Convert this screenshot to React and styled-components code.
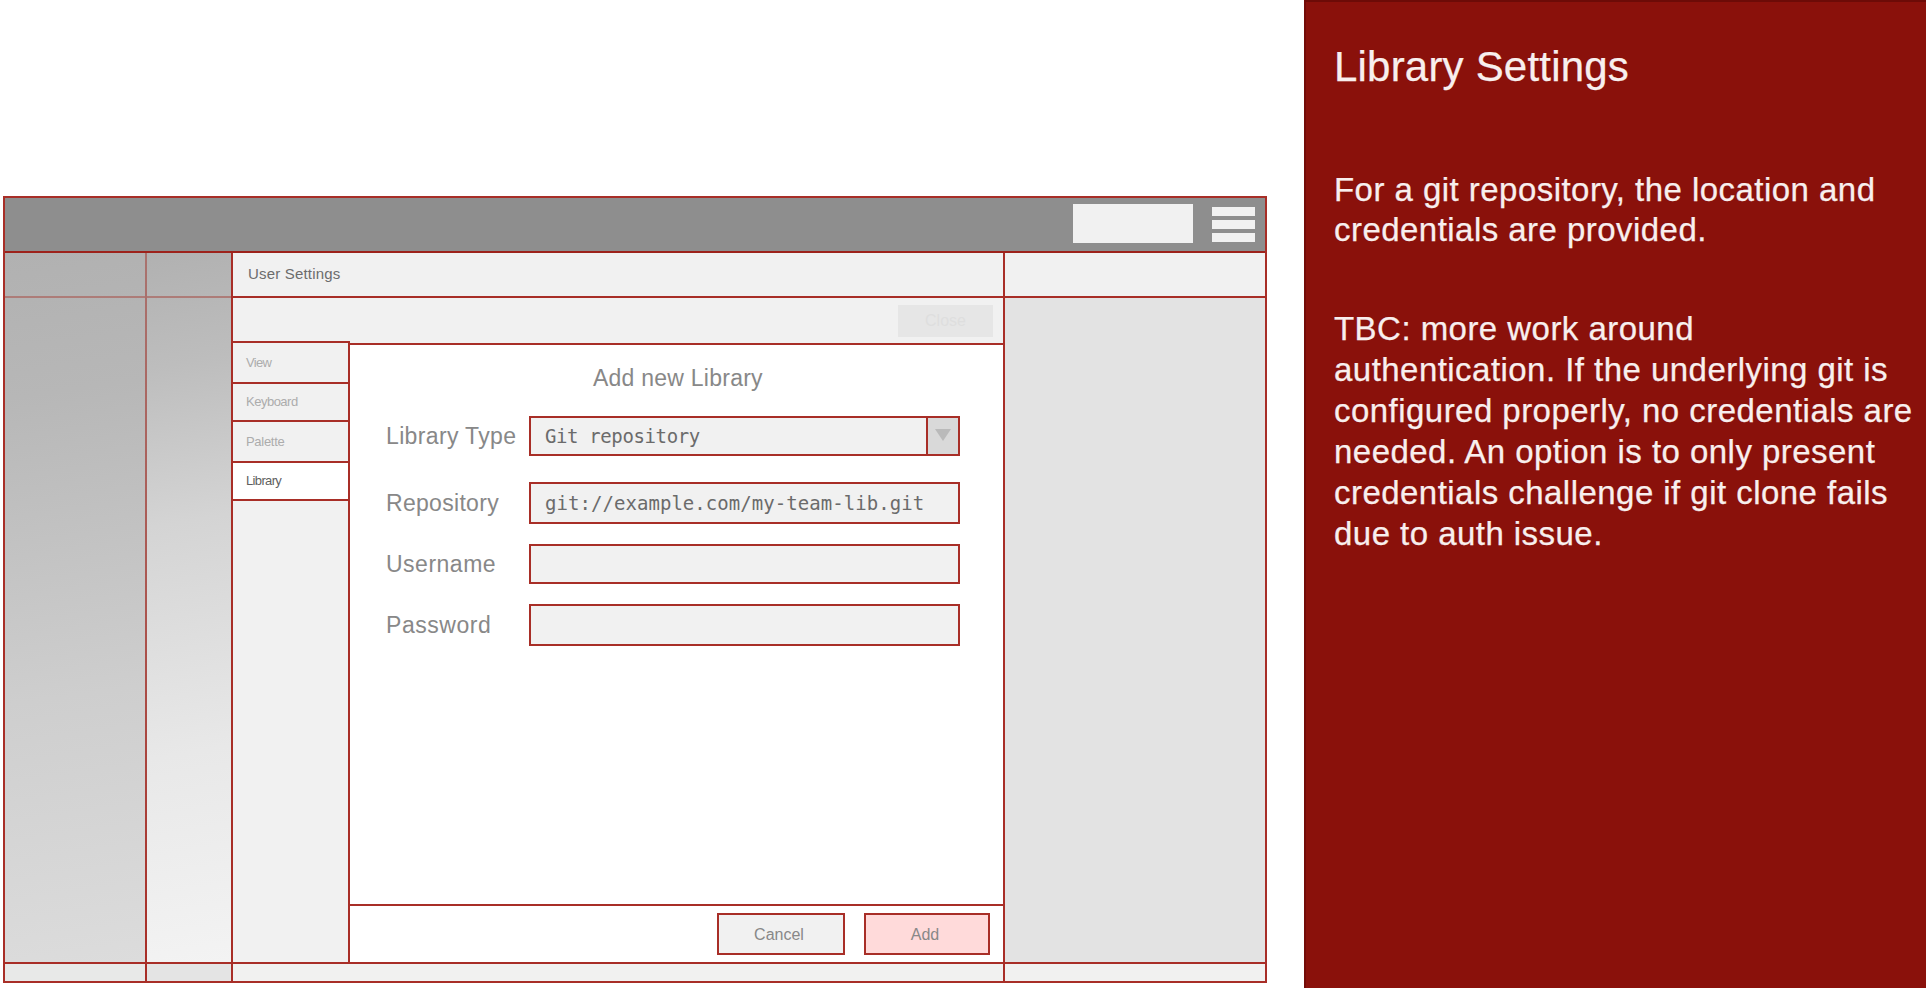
import React from "react";
import styled, { createGlobalStyle, css } from "styled-components";

const line = "#a82e27";
const sans = `"Liberation Sans", Arial, sans-serif`;

const GlobalStyle = createGlobalStyle`
  * { box-sizing: border-box; }
  body { margin: 0; background: #fff; font-family: ${sans}; }
`;

const Page = styled.div`
  display: flex;
  width: 1926px;
  height: 988px;
  overflow: hidden;
`;

const Stage = styled.main`
  width: 1304px;
  padding: 196px 0 0 3px;
`;

const Frame = styled.div`
  display: flex;
  flex-direction: column;
  width: 1264px;
  height: 787px;
  border: 2px solid ${line};
  background: #f1f1f1;
`;

const Header = styled.header`
  display: flex;
  justify-content: flex-end;
  align-items: flex-start;
  height: 55px;
  padding: 6px 10px 0 0;
  background: #8e8e8e;
  border-bottom: 2px solid #9d221b;
`;

const HeaderBox = styled.div`
  width: 120px;
  height: 39px;
  margin-right: 19px;
  background: #f1f1f1;
`;

const MenuIcon = styled.div`
  display: flex;
  flex-direction: column;
  gap: 4px;
  padding-top: 3px;
`;

const MenuBar = styled.span`
  width: 43px;
  height: 9px;
  background: #f1f1f1;
`;

const Body = styled.div`
  display: flex;
  height: 711px;
  border-bottom: 2px solid ${line};
`;

const ShadedColumns = styled.div`
  display: flex;
  width: 228px;
  border-right: 2px solid ${line};
`;

const ShadedColumn = styled.div`
  flex: none;
  width: ${(p) => p.$width}px;
  background: linear-gradient(${(p) => p.$fill});
`;

const ColumnRule = styled.div`
  width: 2px;
  background: linear-gradient(#a9736f, #ab554f 50%, ${line});
`;

const ShadedHead = styled.div`
  height: 45px;
  border-bottom: 2px solid #ad7c78;
`;

const Main = styled.section`
  width: 772px;
  border-right: 2px solid ${line};
`;

const TitleRow = styled.div`
  height: 45px;
  padding-left: 15px;
  border-bottom: 2px solid ${line};
  font-size: 15px;
  line-height: 42px;
  letter-spacing: 0.18px;
  color: #6c6c6c;
`;

const Settings = styled.div`
  display: flex;
  height: 664px;
`;

const Tabs = styled.nav`
  width: 117px;
  margin-top: 43px;
  border-top: 2px solid ${line};
  border-right: 2px solid ${line};
`;

const Tab = styled.div`
  height: ${(p) => p.$height}px;
  line-height: ${(p) => p.$height - 2}px;
  padding-left: 13px;
  border-bottom: 2px solid ${line};
  font-size: 13px;
  letter-spacing: ${(p) => p.$spacing}px;
  color: ${(p) => (p.$active ? "#5f5f5f" : "#acacac")};
  background: ${(p) => (p.$active ? "#fff" : "#f1f1f1")};
`;

const Content = styled.div`
  display: flex;
  flex-direction: column;
  width: 653px;
`;

const Toolbar = styled.div`
  display: flex;
  justify-content: flex-end;
  height: 47px;
  padding: 7px 10px 0 0;
  border-bottom: 2px solid ${line};
`;

const CloseButton = styled.div`
  width: 95px;
  height: 32px;
  background: #e6e6e6;
  color: #dedede;
  font-size: 16px;
  line-height: 32px;
  text-align: center;
`;

const Form = styled.div`
  flex: 1;
  background: #fff;
  color: #888;
  font-size: 23px;
`;

const FormTitle = styled.h2`
  margin: 0 0 5px;
  padding-left: 243px;
  font-size: 23px;
  font-weight: 400;
  line-height: 66px;
  letter-spacing: 0.24px;
`;

const FormRow = styled.div`
  display: flex;
  height: ${(p) => p.$height}px;
  line-height: ${(p) => p.$height}px;
  margin-bottom: ${(p) => p.$gap}px;
  padding-left: 36px;
`;

const Label = styled.label`
  width: 143px;
  white-space: nowrap;
  letter-spacing: ${(p) => p.$spacing}px;
`;

const Field = styled.div`
  display: flex;
  justify-content: space-between;
  align-items: center;
  width: 431px;
  padding-left: 14px;
  border: 2px solid ${line};
  background: #f1f1f1;
  color: #6b6b6b;
  font: 19px "DejaVu Sans Mono", monospace;
  letter-spacing: ${(p) => (p.$select ? -0.38 : 0.05)}px;
`;

const DropArrow = styled.div`
  display: flex;
  justify-content: center;
  width: 32px;
  height: 100%;
  padding-top: 11px;
  border-left: 2px solid ${line};
  background: #d9d9d9;
`;

const Actions = styled.div`
  display: flex;
  justify-content: flex-end;
  gap: 19px;
  height: 58px;
  padding: 7px 13px 0 0;
  border-top: 2px solid ${line};
  background: #fff;
`;

const Action = styled.div`
  width: ${(p) => p.$width}px;
  height: 42px;
  padding: 1px 4px 0 0;
  border: 2px solid ${line};
  color: #888;
  font-size: 16px;
  line-height: 38px;
  text-align: center;
  background: #f1f1f1;
  ${(p) => p.$primary && css`background: #ffdada;`}
`;

const RightColumn = styled.div`
  flex: 1;
  background: #e3e3e3;
`;

const RightHead = styled.div`
  height: 45px;
  background: #f1f1f1;
  border-bottom: 2px solid ${line};
`;

const Footer = styled.footer`
  display: flex;
  height: 17px;
`;

const FooterCell = styled.div`
  width: ${(p) => p.$width}px;
  background: ${(p) => p.$fill};
  border-right: ${(p) => (p.$last ? "none" : `2px solid ${line}`)};
`;

const Notes = styled.aside`
  width: 622px;
  height: 988px;
  padding: 41px 0 0 28px;
  border-top: 2px solid #6d0b07;
  border-left: 2px solid #740c08;
  background: #8a110b;
  color: #f8efee;
  white-space: nowrap;
  -webkit-text-stroke: 0.25px #f8efee;
`;

const NotesTitle = styled.h1`
  margin: 0 0 79px;
  font-size: 42px;
  font-weight: 400;
  line-height: 48px;
  letter-spacing: 0.2px;
`;

const Note = styled.p`
  margin: 0 0 ${(p) => p.$gap || 0}px;
  font-size: 33px;
  line-height: ${(p) => p.$leading}px;
  letter-spacing: 0.46px;
`;

const tabs = [
  { name: "View", height: 41, spacing: -0.7 },
  { name: "Keyboard", height: 38, spacing: -0.5 },
  { name: "Palette", height: 41, spacing: -0.3 },
  { name: "Library", height: 38, spacing: -0.65, active: true },
];

const fields = [
  { label: "Library Type", value: "Git repository", height: 40, gap: 26, spacing: 0.35, select: true },
  { label: "Repository", value: "git://example.com/my-team-lib.git", height: 42, gap: 20, spacing: 0.3 },
  { label: "Username", height: 40, gap: 20, spacing: 0.5 },
  { label: "Password", height: 42, gap: 0, spacing: 0.55 },
];

export default function App() {
  return (
    <Page>
      <GlobalStyle />
      <Stage>
        <Frame>
          <Header>
            <HeaderBox />
            <MenuIcon>
              <MenuBar />
              <MenuBar />
              <MenuBar />
            </MenuIcon>
          </Header>
          <Body>
            <ShadedColumns>
              <ShadedColumn $width={140} $fill="172deg, #b1b1b1, #b7b7b7 20%, #cecece 62%, #dcdcdc">
                <ShadedHead />
              </ShadedColumn>
              <ColumnRule />
              <ShadedColumn $width={84} $fill="170deg, #b1b1b1, #bdbdbd 16%, #d4d4d4 38%, #e8e8e8 70%, #f3f3f3">
                <ShadedHead />
              </ShadedColumn>
            </ShadedColumns>
            <Main>
              <TitleRow>User Settings</TitleRow>
              <Settings>
                <Tabs>
                  {tabs.map((t) => (
                    <Tab key={t.name} $height={t.height} $spacing={t.spacing} $active={t.active}>
                      {t.name}
                    </Tab>
                  ))}
                </Tabs>
                <Content>
                  <Toolbar>
                    <CloseButton>Close</CloseButton>
                  </Toolbar>
                  <Form>
                    <FormTitle>Add new Library</FormTitle>
                    {fields.map((f) => (
                      <FormRow key={f.label} $height={f.height} $gap={f.gap}>
                        <Label $spacing={f.spacing}>{f.label}</Label>
                        <Field $select={f.select}>
                          <span>{f.value}</span>
                          {f.select && (
                            <DropArrow>
                              <svg width="16" height="12" viewBox="0 0 16 12">
                                <path d="M0 0H16L8 12Z" fill="#bababa" />
                              </svg>
                            </DropArrow>
                          )}
                        </Field>
                      </FormRow>
                    ))}
                  </Form>
                  <Actions>
                    <Action $width={128}>Cancel</Action>
                    <Action $width={126} $primary>Add</Action>
                  </Actions>
                </Content>
              </Settings>
            </Main>
            <RightColumn>
              <RightHead />
            </RightColumn>
          </Body>
          <Footer>
            <FooterCell $width={142} $fill="#e8e9e8" />
            <FooterCell $width={86} $fill="#e4e4e4" />
            <FooterCell $width={772} $fill="#f1f1f0" />
            <FooterCell $width={260} $fill="#f1f1f0" $last />
          </Footer>
        </Frame>
      </Stage>
      <Notes>
        <NotesTitle>Library Settings</NotesTitle>
        <Note $leading={40} $gap={58}>
          For a git repository, the location and<br />
          credentials are provided.
        </Note>
        <Note $leading={41}>
          TBC: more work around<br />
          authentication. If the underlying git is<br />
          configured properly, no credentials are<br />
          needed. An option is to only present<br />
          credentials challenge if git clone fails<br />
          due to auth issue.
        </Note>
      </Notes>
    </Page>
  );
}
